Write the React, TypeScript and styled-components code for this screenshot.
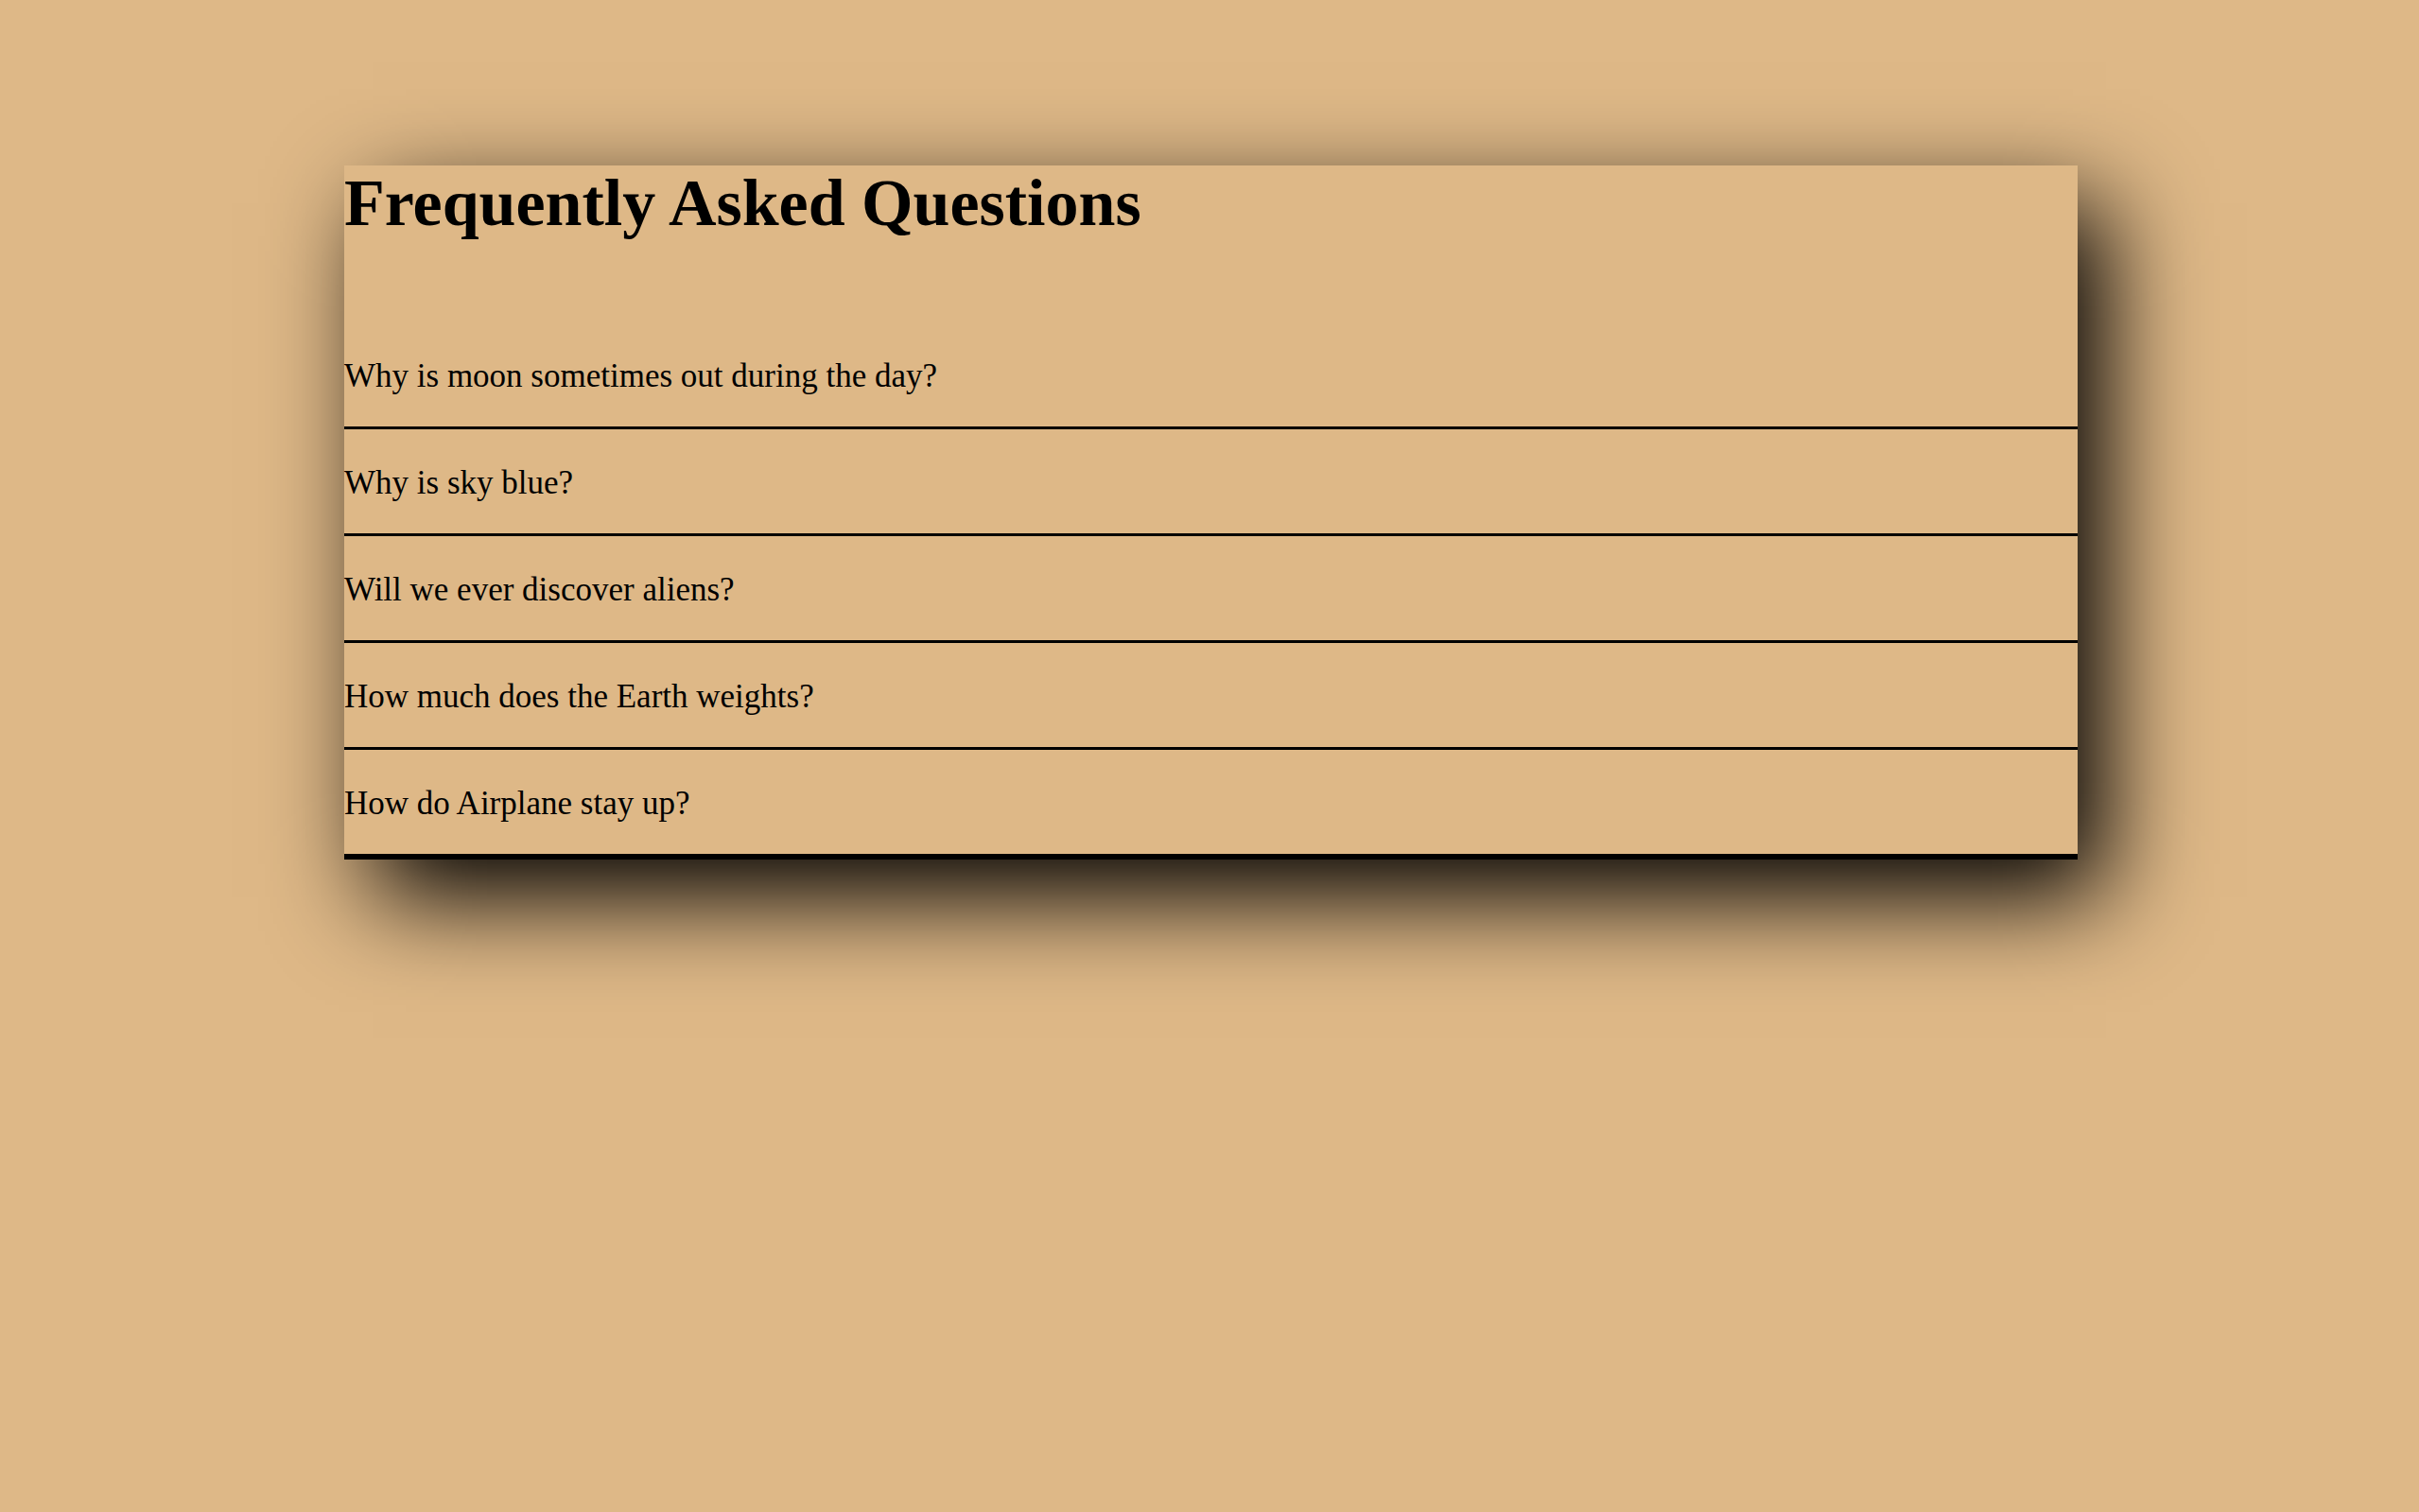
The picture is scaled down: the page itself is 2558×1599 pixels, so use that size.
import React from "react";
import styled, { createGlobalStyle } from "styled-components";

const GlobalStyle = createGlobalStyle`
  html, body {
    margin: 0;
    padding: 0;
    background: #deb887;
    font-family: "Liberation Serif", "Times New Roman", serif;
    color: #000;
  }
  body {
    min-height: 1599px;
  }
`;

const Page = styled.main`
  display: flex;
  flex-direction: column;
  padding: 175px 0 0 364px;
`;

const Card = styled.section`
  width: 1833px;
  background: #deb887;
  border-bottom: 3px solid #000;
  box-shadow: 30px 40px 100px #000;
  display: flex;
  flex-direction: column;
`;

const Title = styled.h1`
  margin: 0 0 86px;
  font-size: 70px;
  line-height: 80px;
  font-weight: 700;
`;

const List = styled.ul`
  list-style: none;
  margin: 0;
  padding: 0;
  display: flex;
  flex-direction: column;
`;

const Item = styled.li`
  padding: 37px 0 33px;
  font-size: 35px;
  line-height: 40px;
  border-bottom: 3px solid #000;
`;

const questions = [
  "Why is moon sometimes out during the day?",
  "Why is sky blue?",
  "Will we ever discover aliens?",
  "How much does the Earth weights?",
  "How do Airplane stay up?",
];

export default function App() {
  return (
    <>
      <GlobalStyle />
      <Page>
        <Card>
          <Title>Frequently Asked Questions</Title>
          <List>
            {questions.map((q) => (
              <Item key={q}>{q}</Item>
            ))}
          </List>
        </Card>
      </Page>
    </>
  );
}
